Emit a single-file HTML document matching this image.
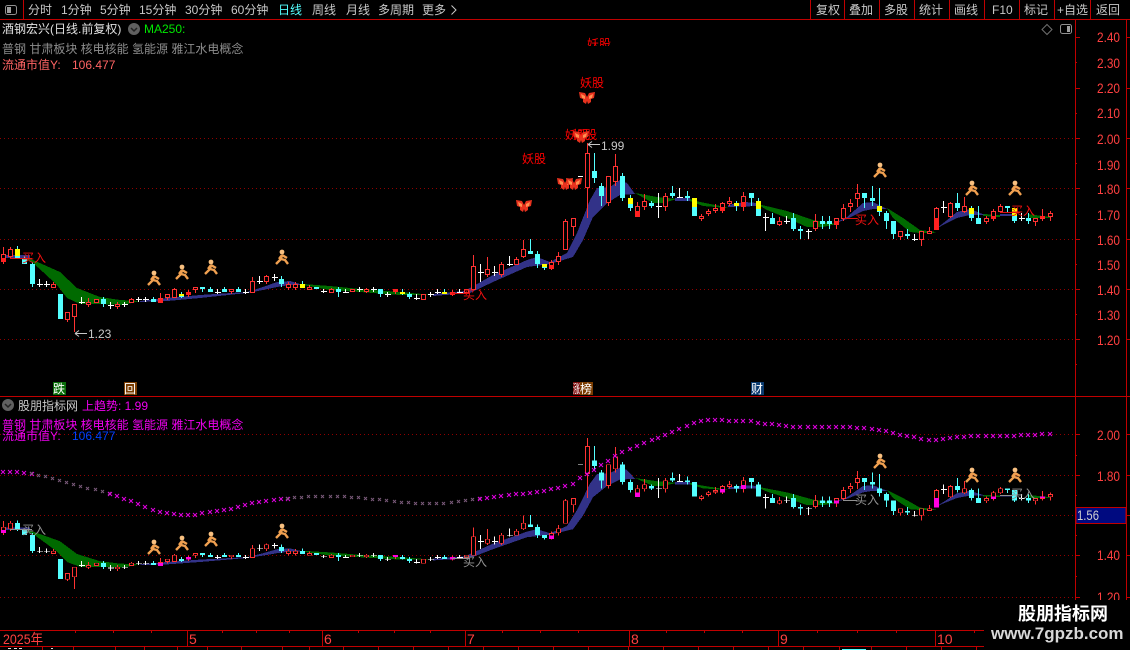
<!DOCTYPE html>
<html lang="zh"><head><meta charset="utf-8"><title>股朋指标网</title>
<style>
html,body{margin:0;padding:0;background:#000;width:1130px;height:650px;overflow:hidden}
svg{position:absolute;left:0;top:0;display:block;font-family:"Liberation Sans","WenQuanYi Zen Hei","Noto Sans CJK SC",sans-serif;font-size:12px}
.ax{font-size:14px}
.gr{stroke:#900000;stroke-dasharray:1 3;fill:none}
.ln{stroke:#c00000;fill:none}
.k{shape-rendering:crispEdges}
.rs{fill:var(--rs)}
.ye{fill:var(--ye)}
.mk{fill:none;marker-start:url(#x1);marker-mid:url(#x1);marker-end:url(#x1)}
.mg{fill:none;marker-start:url(#x2);marker-mid:url(#x2);marker-end:url(#x2)}
</style></head><body>
<svg width="1130" height="650" viewBox="0 0 1130 650" xmlns="http://www.w3.org/2000/svg">
<defs>
<marker id="x1" markerUnits="userSpaceOnUse" markerWidth="6" markerHeight="6" refX="3" refY="3"><path d="M1 1L5 5M5 1L1 5" stroke="#e000e0" fill="none"/></marker>
<marker id="x2" markerUnits="userSpaceOnUse" markerWidth="6" markerHeight="6" refX="3" refY="3"><path d="M1 1L4 4M4 1L1 4" stroke="#7a5a7a" fill="none"/></marker>
<clipPath id="cl"><rect x="0" y="20" width="1075" height="26"/></clipPath>
<g id="run"><circle cx="0" cy="-6" r="2.4" fill="#f8c080"/><path d="M0 -3L-1 1L-6 6M-1 1L3 2L6 6M0 -3L-3 1M0 -3L5 0" stroke="#f0a050" stroke-width="2.4" fill="none"/></g>
<g id="fly"><path d="M0 -1L-2 -5L-8 -6L-7 0L-4 1L-4 4L-1 6L0 3L1 6L4 4L4 1L7 0L8 -6L2 -5z" fill="#e8321e"/><path d="M-2 -2L-6 -4L-5 0L-2 1zM2 -2L6 -4L5 0L2 1z" fill="#ff9050"/></g>
<g id="c" class="k">
<path fill="#006a00" d="M24 258L33 260 60 272 77 288 100 297 120 300 140 301 123 305 100 304 80 304 67 298 57 285 43 272 33 263zM303 284L330 286 360 289 400 292 433 295 400 295 360 292 330 290 303 285zM635 193L657 197 677 199 663 203 653 203zM690 199L700 202 725 207 728 208 703 206 690 201zM757 204L762 205 787 211 813 220 837 224 823 227 807 227 787 218 767 210zM887 208L903 218 920 230 936 232 933 233 920 233 910 232 893 218zM983 214L1000 215 1000 217 983 216zM1028 214L1050 217 1050 218 1030 218z"/>
<path fill="#323288" d="M2 255H30V258H2zM140 301L167 298 200 295 247 292 263 287 277 282 290 281 300 284 303 285 290 285 277 287 263 290 247 293 200 298 167 301 140 302zM433 294L465 291 470 288 493 275 527 260 537 257 550 262 567 253 577 233 590 200 597 188 610 187 620 180 627 183 635 194 620 195 607 203 593 217 583 240 573 257 550 264 527 267 493 282 470 293 433 296zM675 198H690V201H675zM728 205L745 202 757 203 757 206 728 207zM833 224L847 217 863 203 873 202 887 209 873 209 863 211 847 219zM936 229L957 212 970 209 985 215 970 215 957 218 943 225zM1000 214H1014V216H1000z"/>
<path stroke="#ff3232" fill="none" d="M3.5 247V264M10.5 247V259M53.5 282V288M67.5 312V322M74.5 304V332M88.5 298V307M117.5 302V309M131.5 298V303M160.5 293V303M167.5 294V300M174.5 288V298M188.5 290V297M195.5 287V293M231.5 289V294M252.5 277V293M266.5 275V284M288.5 282V290M295.5 282V290M309.5 285V290M331.5 288V293M366.5 288V293M395.5 289V294M452.5 290V296M473.5 255V290M487.5 257V277M501.5 262V277M516.5 257V265M523.5 240V258M551.5 260V270M558.5 252V265M565.5 219V250M573.5 218V236M587.5 143V218M608.5 176V206M615.5 154V186M637.5 202V217M644.5 194V210M665.5 193V211M701.5 214V221M708.5 209V216M715.5 204V213M722.5 202V213M729.5 197V206M743.5 192V211M779.5 217V226M815.5 214V231M836.5 218V229M843.5 204V221M850.5 199V212M857.5 184V207M900.5 231V240M921.5 231V246M929.5 227V234M936.5 207V230M950.5 202V218M964.5 197V213M986.5 216V224M993.5 209V221M1000.5 204V213M1035.5 218V226M1042.5 209V221M1050.5 211V221"/>
<path stroke="#ff3232" fill="#000" d="M1.5 254.5h4v7h-4zM8.5 249.5h4v7h-4zM51.5 284.5h4v3h-4zM65.5 312.5h4v7h-4zM72.5 304.5h4v12h-4zM86.5 302.5h4v2h-4zM94.5 299.5h4v3h-4zM115.5 304.5h4v2h-4zM129.5 299.5h4v3h-4zM158.5 298.5h4v4h-4zM165.5 294.5h4v3h-4zM172.5 289.5h4v8h-4zM186.5 292.5h4v2h-4zM193.5 287.5h4v2h-4zM229.5 289.5h4v2h-4zM250.5 281.5h4v11h-4zM264.5 276.5h4v5h-4zM286.5 284.5h4v3h-4zM293.5 284.5h4v3h-4zM307.5 287.5h4v2h-4zM329.5 289.5h4v3h-4zM350.5 289.5h4v2h-4zM364.5 289.5h4v2h-4zM393.5 289.5h4v2h-4zM421.5 294.5h4v5h-4zM450.5 292.5h4v2h-4zM464.5 289.5h4v3h-4zM471.5 266.5h4v23h-4zM485.5 269.5h4v5h-4zM499.5 264.5h4v10h-4zM514.5 259.5h4v5h-4zM521.5 249.5h4v7h-4zM549.5 262.5h4v6h-4zM556.5 256.5h4v5h-4zM563.5 221.5h4v28h-4zM571.5 218.5h4v8h-4zM585.5 153.5h4v34h-4zM606.5 176.5h4v26h-4zM613.5 166.5h4v15h-4zM635.5 206.5h4v10h-4zM642.5 201.5h4v5h-4zM663.5 196.5h4v10h-4zM699.5 216.5h4v2h-4zM706.5 211.5h4v2h-4zM713.5 208.5h4v2h-4zM720.5 203.5h4v7h-4zM727.5 201.5h4v2h-4zM741.5 196.5h4v10h-4zM777.5 221.5h4v3h-4zM813.5 221.5h4v7h-4zM834.5 218.5h4v6h-4zM841.5 208.5h4v10h-4zM848.5 203.5h4v3h-4zM855.5 193.5h4v5h-4zM898.5 231.5h4v5h-4zM919.5 231.5h4v8h-4zM927.5 231.5h4v2h-4zM934.5 208.5h4v21h-4zM948.5 203.5h4v13h-4zM962.5 206.5h4v5h-4zM984.5 218.5h4v3h-4zM991.5 211.5h4v7h-4zM998.5 206.5h4v5h-4zM1033.5 218.5h4v3h-4zM1040.5 216.5h4v2h-4zM1048.5 213.5h4v3h-4z"/>
<path class="rs" d="M1 258h5v4h-5zM158 299h5v4h-5zM186 292h5v3h-5zM393 289h5v3h-5zM450 292h5v3h-5zM549 265h5v4h-5zM635 211h5v6h-5zM720 207h5v4h-5zM741 202h5v5h-5zM834 221h5v4h-5zM934 218h5v12h-5zM991 216h5v3h-5zM1040 216h5v2h-5z"/>
<path stroke="#54ffff" fill="none" d="M17.5 246V259M24.5 256V264M32.5 262V287M103.5 297V307M153.5 297V302M181.5 292V298M202.5 287V292M210.5 287V292M224.5 287V292M238.5 287V292M281.5 276V287M302.5 281V288M338.5 287V297M380.5 289V297M402.5 289V295M409.5 292V299M444.5 289V294M530.5 239V254M537.5 251V268M544.5 264V270M594.5 153V183M601.5 183V206M622.5 173V201M630.5 195V211M651.5 201V208M672.5 186V198M687.5 191V201M736.5 201V211M751.5 193V206M758.5 198V216M772.5 213V224M793.5 213V231M800.5 226V239M822.5 216V229M829.5 216V229M864.5 193V208M872.5 186V206M879.5 188V216M886.5 211V229M893.5 221V239M907.5 229V239M957.5 193V211M971.5 206V221M978.5 206V224M1007.5 206V212M1014.5 208V223M1028.5 213V224"/>
<path fill="#54ffff" d="M15 249h5v9h-5zM22 258h5v6h-5zM30 264h5v20h-5zM58 294h5v25h-5zM101 299h5v5h-5zM151 299h5v3h-5zM179 294h5v3h-5zM200 287h5v2h-5zM208 289h5v3h-5zM222 289h5v3h-5zM236 289h5v3h-5zM279 279h5v5h-5zM300 284h5v4h-5zM314 287h5v2h-5zM336 289h5v3h-5zM378 289h5v5h-5zM400 292h5v2h-5zM407 294h5v3h-5zM442 292h5v2h-5zM528 251h5v3h-5zM535 254h5v10h-5zM542 264h5v4h-5zM592 171h5v7h-5zM599 186h5v10h-5zM620 176h5v22h-5zM628 198h5v10h-5zM649 203h5v3h-5zM670 193h5v3h-5zM685 196h5v2h-5zM692 198h5v18h-5zM734 203h5v3h-5zM749 193h5v5h-5zM756 201h5v15h-5zM770 218h5v6h-5zM791 218h5v11h-5zM798 229h5v2h-5zM820 221h5v3h-5zM827 221h5v3h-5zM862 193h5v5h-5zM870 198h5v3h-5zM877 206h5v6h-5zM884 213h5v8h-5zM891 221h5v13h-5zM905 234h5v2h-5zM955 203h5v5h-5zM969 208h5v10h-5zM976 218h5v6h-5zM1005 206h5v2h-5zM1012 208h5v13h-5zM1026 218h5v3h-5z"/>
<path class="ye" d="M15 249h5v7h-5zM179 294h5v2h-5zM300 284h5v4h-5zM400 292h5v2h-5zM442 292h5v2h-5zM542 264h5v3h-5zM628 198h5v6h-5zM692 198h5v9h-5zM734 203h5v3h-5zM756 201h5v8h-5zM877 206h5v5h-5zM969 208h5v6h-5zM1012 208h5v8h-5z"/>
<path stroke="#fff" fill="none" d="M39.5 279V287M37 284.5h6M46.5 281V287M44 284.5h6M81.5 297V304M79 302.5h6M110.5 302V309M108 305.5h6M124.5 302V307M122 304.5h6M138.5 297V302M136 299.5h6M145.5 297V302M143 299.5h6M217.5 289V294M215 292.5h6M245.5 289V294M243 292.5h6M259.5 276V284M257 281.5h6M274.5 274V281M272 277.5h6M323.5 289V293M321 291.5h6M345.5 289V293M343 292.5h6M359.5 287V292M357 289.5h6M373.5 287V292M371 289.5h6M387.5 292V297M385 294.5h6M416.5 294V300M414 298.5h6M430.5 292V297M428 294.5h6M437.5 289V294M435 292.5h6M459.5 289V294M457 292.5h6M480.5 264V282M478 272.5h6M494.5 266V276M492 272.5h6M509.5 256V266M507 264.5h6M578 176.5h5M658.5 193V218M656 206.5h6M679.5 188V198M677 197.5h6M765.5 213V231M763 217.5h6M786.5 216V224M784 221.5h6M808.5 229V239M806 231.5h6M914.5 234V241M912 239.5h6M943.5 201V213M941 207.5h6M1021.5 213V221M1019 218.5h6"/>
</g>
</defs>

<!-- grid -->
<path class="gr" d="M0 138.5H1075M0 188.5H1075M0 239.5H1075M0 289.5H1075M0 339.5H1075M0 434.5H1075M0 475.5H1075M0 515.5H1075M0 555.5H1075M0 597.5H1075" shape-rendering="crispEdges"/>

<!-- charts -->
<use href="#c" style="--rs:#ff2020;--ye:#ffff00"/>
<polyline class="mk" points="3,472 10,472 17,472 24,473 32,474"/>
<polyline class="mg" points="32,474 39,476 46,477 53,479 60,481 67,483 74,485 81,487 88,489 96,490 103,492 110,494"/>
<polyline class="mk" points="110,494 117,496 124,499 131,501 138,504 145,507 153,510 160,512 167,513 174,514 181,515 188,515 195,515 202,513 210,512 217,511 224,510 231,509 238,507 245,505 252,503 259,502 266,501 274,500 281,499 288,499"/>
<polyline class="mg" points="288,499 295,498 302,498 309,497 316,497 323,497 331,497 338,497 345,497 352,498 359,498 366,499 373,500 380,500 387,501 395,502 402,503 409,503 416,504 423,504 430,504 437,504 444,504 452,503 459,502 466,501 473,500 480,499"/>
<use href="#c" transform="matrix(1 0 0 .8 0 323.6)" style="--rs:#ff00e0;--ye:#54ffff"/>
<polyline class="mk" points="480,499 487,498 494,497 501,496 509,495 516,494 523,494 530,493 537,492 544,491 551,489 558,488 565,486 573,484 580,478 587,474 594,470 601,465 608,461 615,456 622,452 630,449 637,446 644,443 652,440 658,438 665,435 672,432 679,429 687,426 694,423 701,421 708,420 715,420 722,420 729,421 736,421 743,421 751,421 758,423 765,424 772,424 779,425 786,426 793,427 800,427 808,427 815,427 822,427 829,427 836,427 843,427 850,427 857,428 864,428 872,429 879,430 886,431 893,433 900,435 907,436 914,437 921,439 929,440 936,440 943,439 950,438 957,437 964,437 971,436 978,436 986,436 993,436 1000,436 1007,436 1014,436 1021,435 1028,435 1035,435 1042,434 1050,434"/>

<!-- buy labels + lines -->
<g fill="none" stroke="#e01010" class="k"><path d="M10 258.5H32M452 293.5H470M843 218.5H857M1000 212.5H1020"/></g>
<g fill="none" stroke="#909090" class="k"><path d="M10 529.5H32M452 558.5H470M843 500.5H857M1000 495.5H1013"/></g>
<g fill="#f01010"><text x="22" y="262">买入</text><text x="463" y="299">买入</text><text x="855" y="224">买入</text><text x="1011" y="215">买入</text></g>
<g fill="#909090"><text x="22" y="534">买入</text><text x="463" y="566">买入</text><text x="855" y="504">买入</text><text x="1011" y="498">买入</text></g>

<!-- runners -->
<use href="#run" x="154" y="279"/><use href="#run" x="182" y="273"/><use href="#run" x="211" y="268"/><use href="#run" x="282" y="258"/><use href="#run" x="880" y="171"/><use href="#run" x="972" y="189"/><use href="#run" x="1015" y="189"/>
<use href="#run" x="154" y="548"/><use href="#run" x="182" y="544"/><use href="#run" x="211" y="540"/><use href="#run" x="282" y="532"/><use href="#run" x="880" y="462"/><use href="#run" x="972" y="476"/><use href="#run" x="1015" y="476"/>

<!-- yao gu -->
<g fill="#ff0000">
<text x="587" y="48" clip-path="url(#cl)">妖股</text>
<text x="580" y="87">妖股</text>
<text x="565" y="139">妖股</text><text x="573" y="139">妖股</text>
<text x="522" y="163">妖股</text>
</g>
<use href="#fly" x="587" y="98"/><use href="#fly" x="581" y="137"/><use href="#fly" x="565" y="184"/><use href="#fly" x="574" y="184"/><use href="#fly" x="524" y="206"/>

<!-- price labels -->
<g fill="#c8c8c8">
<path d="M75 333.5H87M75 333.5L79 330.5M75 333.5L79 336.5" stroke="#c8c8c8" fill="none"/>
<text x="88" y="338">1.23</text>
<path d="M588 144.5H600M588 144.5L592 141.5M588 144.5L592 147.5" stroke="#c8c8c8" fill="none"/>
<text x="601" y="150">1.99</text>
</g>

<!-- event tags -->
<g class="k">
<rect x="53" y="382" width="13" height="13" fill="#0a6e0a"/>
<rect x="124" y="382" width="13" height="13" fill="#7a3c00"/>
<rect x="573" y="382" width="7" height="13" fill="#7a0a0a"/>
<rect x="580" y="382" width="13" height="13" fill="#7a3c00"/>
<rect x="751" y="382" width="13" height="13" fill="#0a3a6e"/>
</g>
<g fill="#fff"><text x="53" y="393">跌</text><text x="124" y="393">回</text><text x="573" y="393" textLength="7" lengthAdjust="spacingAndGlyphs">涨</text><text x="580" y="393">榜</text><text x="751" y="393">财</text></g>

<!-- frame lines -->
<g class="ln k">
<path d="M0 19.5H1130M23.5 0V19M810.5 0V19M844.5 0V19M879.5 0V19M914.5 0V19M949.5 0V19M984.5 0V19M1019.5 0V19M1054.5 0V19M1090.5 0V19"/>
<path d="M0 396.5H1130"/>
<path d="M1075.5 19V600M1126.5 19V600"/>
<path d="M0 630.5H984M0 646.5H984M187.5 630V646M322.5 630V646M465.5 630V646M629.5 630V646M778.5 630V646M935.5 630V646"/>
<path d="M75.5 631V633M113.5 631V633M151.5 631V633M222.5 631V633M256.5 631V633M289.5 631V633M358.5 631V633M394.5 631V633M430.5 631V633M502.5 631V633M540.5 631V633M578.5 631V633M666.5 631V633M704.5 631V633M742.5 631V633M817.5 631V633M857.5 631V633M896.5 631V633M974.5 631V633"/>
<path d="M42.5 646V650M73.5 646V650M115.5 646V650M144.5 646V650M177.5 646V650M207.5 646V650M241.5 646V650M282.5 646V650M309.5 646V650M343.5 646V650M378.5 646V650M413.5 646V650M448.5 646V650M483.5 646V650M518.5 646V650M553.5 646V650M588.5 646V650M628.5 646V650M663.5 646V650M698.5 646V650M733.5 646V650M768.5 646V650M803.5 646V650M839.5 646V650M871.5 646V650M906.5 646V650M941.5 646V650M976.5 646V650"/>
<path d="M1075 37.5h5M1075 62.5h2M1075 88.5h5M1075 113.5h2M1075 138.5h5M1075 163.5h2M1075 188.5h5M1075 214.5h2M1075 239.5h5M1075 264.5h2M1075 289.5h5M1075 314.5h2M1075 339.5h5M1075 364.5h2M1126 37.5h4M1126 88.5h4M1126 138.5h4M1126 188.5h4M1126 239.5h4M1126 289.5h4M1126 339.5h4"/>
<path d="M1075 434.5h5M1075 455.5h2M1075 475.5h5M1075 495.5h2M1075 515.5h5M1075 535.5h2M1075 555.5h5M1075 576.5h2M1075 597.5h5M1126 434.5h4M1126 475.5h4M1126 515.5h4M1126 555.5h4M1126 597.5h4"/>
</g>

<!-- top bar -->
<rect x="5.5" y="5.5" width="11" height="9" rx="2" fill="none" stroke="#909090"/>
<rect x="7" y="7" width="4" height="6" fill="#a0a0a0"/>
<g fill="#c8c8c8">
<text x="28" y="14">分时</text><text x="61" y="14">1分钟</text><text x="100" y="14">5分钟</text><text x="139" y="14">15分钟</text><text x="185" y="14">30分钟</text><text x="231" y="14">60分钟</text>
<text x="278" y="14" fill="#54ffff">日线</text>
<text x="312" y="14">周线</text><text x="346" y="14">月线</text><text x="378" y="14">多周期</text><text x="422" y="14">更多</text>
<path d="M451.5 5.5L456 10L451.5 14.5" fill="none" stroke="#c8c8c8"/>
<text x="816" y="14">复权</text><text x="849" y="14">叠加</text><text x="884" y="14">多股</text><text x="919" y="14">统计</text><text x="954" y="14">画线</text><text x="992" y="14">F10</text><text x="1024" y="14">标记</text><text x="1057" y="14">+自选</text><text x="1096" y="14">返回</text>
</g>

<!-- header texts -->
<text x="2" y="33" fill="#e0e0e0">酒钢宏兴(日线.前复权)</text>
<circle cx="134" cy="29" r="6" fill="#606060"/><path d="M131 28L134 31L137 28" stroke="#222" stroke-width="1.5" fill="none"/>
<text x="144" y="33" fill="#00e800">MA250:</text>
<text x="2" y="53" fill="#8c8c8c">普钢 甘肃板块 核电核能 氢能源 雅江水电概念</text>
<text x="2" y="69" fill="#ff6464">流通市值Y:</text><text x="72" y="69" fill="#ff6464">106.477</text>

<path d="M1047 24.5L1052 29.5L1047 34.5L1042 29.5z" fill="none" stroke="#707070"/>
<rect x="1060.5" y="24.5" width="11" height="9" rx="2" fill="none" stroke="#909090"/><rect x="1067" y="26" width="3" height="6" fill="#a0a0a0"/>

<circle cx="8" cy="405" r="6" fill="#606060"/><path d="M5 404L8 407L11 404" stroke="#222" stroke-width="1.5" fill="none"/>
<text x="18" y="410" fill="#c8c8c8">股朋指标网</text>
<text x="82" y="410" fill="#f000f0">上趋势: 1.99</text>
<text x="2" y="429" fill="#f000f0">普钢 甘肃板块 核电核能 氢能源 雅江水电概念</text>
<text x="2" y="440" fill="#f000f0">流通市值Y:</text><text x="72" y="440" fill="#0040ff">106.477</text>

<!-- axis labels -->
<g fill="#ff4040" class="ax">
<text x="1097" y="42" textLength="23" lengthAdjust="spacingAndGlyphs">2.40</text>
<text x="1097" y="68" textLength="23" lengthAdjust="spacingAndGlyphs">2.30</text>
<text x="1097" y="93" textLength="23" lengthAdjust="spacingAndGlyphs">2.20</text>
<text x="1097" y="118" textLength="23" lengthAdjust="spacingAndGlyphs">2.10</text>
<text x="1097" y="144" textLength="23" lengthAdjust="spacingAndGlyphs">2.00</text>
<text x="1097" y="170" textLength="23" lengthAdjust="spacingAndGlyphs">1.90</text>
<text x="1097" y="194" textLength="23" lengthAdjust="spacingAndGlyphs">1.80</text>
<text x="1097" y="220" textLength="23" lengthAdjust="spacingAndGlyphs">1.70</text>
<text x="1097" y="245" textLength="23" lengthAdjust="spacingAndGlyphs">1.60</text>
<text x="1097" y="270" textLength="23" lengthAdjust="spacingAndGlyphs">1.50</text>
<text x="1097" y="295" textLength="23" lengthAdjust="spacingAndGlyphs">1.40</text>
<text x="1097" y="320" textLength="23" lengthAdjust="spacingAndGlyphs">1.30</text>
<text x="1097" y="345" textLength="23" lengthAdjust="spacingAndGlyphs">1.20</text>
<text x="1097" y="440" textLength="23" lengthAdjust="spacingAndGlyphs">2.00</text>
<text x="1097" y="481" textLength="23" lengthAdjust="spacingAndGlyphs">1.80</text>
<text x="1097" y="560" textLength="23" lengthAdjust="spacingAndGlyphs">1.40</text>
<text x="1097" y="602" textLength="23" lengthAdjust="spacingAndGlyphs">1.20</text>
</g>
<rect x="1076" y="507.5" width="50" height="16" fill="#000a80" stroke="#c00000" class="k"/>
<text x="1077" y="520" class="ax" fill="#d0d0d0" textLength="22" lengthAdjust="spacingAndGlyphs">1.56</text>

<!-- time labels -->
<g fill="#ff4040" class="ax">
<text x="3" y="644" textLength="40" lengthAdjust="spacingAndGlyphs">2025年</text>
<text x="189" y="644">5</text><text x="324" y="644">6</text><text x="467" y="644">7</text><text x="631" y="644">8</text><text x="780" y="644">9</text><text x="937" y="644">10</text>
</g>
<path d="M8 648.5h3M14 648.5h3M19 648.5h3M51 648.5h2" stroke="#e0e0e0" class="k"/>
<rect x="842" y="649" width="24" height="1" fill="#54ffff" class="k"/>

<!-- watermark -->
<rect x="984" y="600" width="146" height="50" fill="#000"/>
<text x="1018" y="620" fill="#fff" font-weight="bold" style="font-size:18px">股朋指标网</text>
<text x="991" y="639" fill="#d8d8d8" font-weight="bold" style="font-size:17px">www.7gpzb.com</text>
</svg>
</body></html>
